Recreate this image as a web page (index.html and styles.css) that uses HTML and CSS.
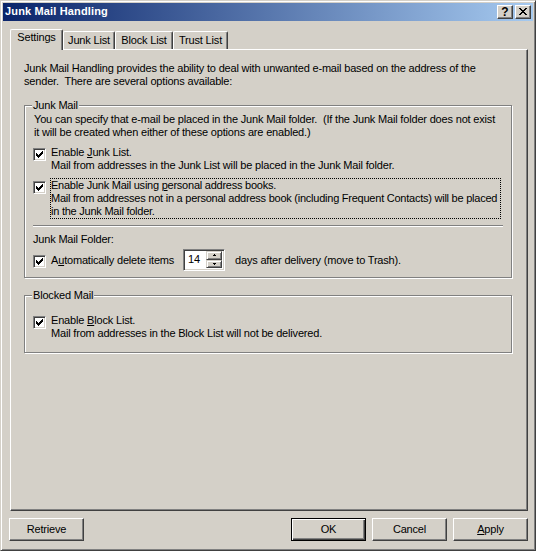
FILE: index.html
```html
<!DOCTYPE html>
<html>
<head>
<meta charset="utf-8">
<title>Junk Mail Handling</title>
<link rel="stylesheet" href="styles.css">
</head>
<body>
<div class="window">
  <div class="titlebar">
    <span class="title">Junk Mail Handling</span>
    <div class="caption-btns">
      <span class="cap-btn help">?</span>
      <span class="cap-btn close">
        <svg width="8" height="7" viewBox="0 0 8 7" shape-rendering="crispEdges"><path d="M0 0h2v1H0zM6 0h2v1H6zM1 1h2v1H1zM5 1h2v1H5zM2 2h4v1H2zM3 3h2v1H3zM2 4h4v1H2zM1 5h2v1H1zM5 5h2v1H5zM0 6h2v1H0zM6 6h2v1H6z" fill="#000"/></svg>
      </span>
    </div>
  </div>
  <div class="body">
    <div class="tabs">
      <div class="tab tab-settings active">Settings</div>
      <div class="tab tab-junk">Junk List</div>
      <div class="tab tab-block">Block List</div>
      <div class="tab tab-trust">Trust List</div>
    </div>
    <div class="panel">
      <p class="intro">Junk Mail Handling provides the ability to deal with unwanted e-mail based on the address of the<br>sender.&nbsp; There are several options available:</p>

      <div class="group group-junk">
        <span class="group-title">Junk Mail</span>
        <p class="desc">You can specify that e-mail be placed in the Junk Mail folder.&nbsp; (If the Junk Mail folder does not exist<br>it will be created when either of these options are enabled.)</p>
        <div class="check-row row-first">
          <span class="cb"><svg width="7" height="7" viewBox="0 0 7 7" shape-rendering="crispEdges"><path d="M6 0h1v3H6zM5 1h1v3H5zM4 2h1v3H4zM3 3h1v3H3zM2 4h1v3H2zM1 3h1v3H1zM0 2h1v3H0z" fill="#000"/></svg></span>
          <div class="check-text">Enable <u>J</u>unk List.<br>Mail from addresses in the Junk List will be placed in the Junk Mail folder.</div>
        </div>
        <div class="check-row row-second">
          <span class="cb"><svg width="7" height="7" viewBox="0 0 7 7" shape-rendering="crispEdges"><path d="M6 0h1v3H6zM5 1h1v3H5zM4 2h1v3H4zM3 3h1v3H3zM2 4h1v3H2zM1 3h1v3H1zM0 2h1v3H0z" fill="#000"/></svg></span>
          <div class="check-text focus">Enable Junk Mail using <u>p</u>ersonal address books.<br>Mail from addresses not in a personal address book (including Frequent Contacts) will be placed<br>in the Junk Mail folder.</div>
        </div>
        <div class="separator"></div>
        <div class="folder-label">Junk Mail Folder:</div>
        <div class="delete-row">
          <span class="cb"><svg width="7" height="7" viewBox="0 0 7 7" shape-rendering="crispEdges"><path d="M6 0h1v3H6zM5 1h1v3H5zM4 2h1v3H4zM3 3h1v3H3zM2 4h1v3H2zM1 3h1v3H1zM0 2h1v3H0z" fill="#000"/></svg></span>
          <span class="delete-label">A<u>u</u>tomatically delete items</span>
          <div class="spin">
            <span class="spin-value">14</span>
            <div class="spin-btns">
              <span class="spin-btn"><svg width="3" height="2" viewBox="0 0 3 2" shape-rendering="crispEdges"><path d="M1 0h1v1h1v1H0V1h1z" fill="#000"/></svg></span>
              <span class="spin-btn"><svg width="3" height="2" viewBox="0 0 3 2" shape-rendering="crispEdges"><path d="M0 0h3v1H2v1H1V1H0z" fill="#000"/></svg></span>
            </div>
          </div>
          <span class="after">days after delivery (move to Trash).</span>
        </div>
      </div>

      <div class="group group-blocked">
        <span class="group-title">Blocked Mail</span>
        <div class="check-row">
          <span class="cb"><svg width="7" height="7" viewBox="0 0 7 7" shape-rendering="crispEdges"><path d="M6 0h1v3H6zM5 1h1v3H5zM4 2h1v3H4zM3 3h1v3H3zM2 4h1v3H2zM1 3h1v3H1zM0 2h1v3H0z" fill="#000"/></svg></span>
          <div class="check-text">Enable <u>B</u>lock List.<br>Mail from addresses in the Block List will not be delivered.</div>
        </div>
      </div>
    </div>
    <div class="buttons">
      <span class="btn btn-retrieve">Retrieve</span>
      <span class="spacer"></span>
      <span class="btn btn-default">OK</span>
      <span class="btn">Cancel</span>
      <span class="btn"><u>A</u>pply</span>
    </div>
  </div>
</div>
</body>
</html>
```

FILE: styles.css
```css
* {
  box-sizing: border-box;
  margin: 0;
  padding: 0;
}

html, body {
  background: #d4d0c8;
}

body {
  margin: 0;
  font-family: "Liberation Sans", Arial, sans-serif;
  font-size: 11px;
  line-height: 13px;
  letter-spacing: -0.18px;
  color: #000;
}

u {
  text-decoration: underline;
  text-underline-offset: 1px;
}

.window {
  width: 536px;
  height: 551px;
  border: 1px solid;
  border-color: #d4d0c8 #404040 #404040 #d4d0c8;
  box-shadow: inset 1px 1px 0 #fff, inset -1px -1px 0 #808080;
  padding: 2px;
  background: #d4d0c8;
  display: flex;
  flex-direction: column;
}

/* Title bar */
.titlebar {
  height: 18px;
  flex: none;
  background: linear-gradient(to right, #0a246a, #a6caf0);
  display: flex;
  align-items: center;
  justify-content: space-between;
  padding: 0 2px;
}

.title {
  color: #fff;
  font-weight: bold;
  letter-spacing: 0.15px;
  margin-top: -1px;
}

.caption-btns {
  display: flex;
  gap: 2px;
}

.cap-btn {
  width: 16px;
  height: 14px;
  background: #d4d0c8;
  border: 1px solid;
  border-color: #fff #404040 #404040 #fff;
  box-shadow: inset -1px -1px 0 #808080;
  display: flex;
  align-items: center;
  justify-content: center;
}

.cap-btn.help {
  font-weight: bold;
  font-size: 12px;
  line-height: 12px;
  letter-spacing: 0;
  padding-bottom: 1px;
}

.cap-btn.close svg {
  display: block;
  margin-left: -1px;
  margin-top: -1px;
}

/* Body */
.body {
  flex: 1;
  display: flex;
  flex-direction: column;
  padding: 8px 5px 0 7px;
}

.tabs {
  height: 20px;
  display: flex;
  align-items: flex-end;
  position: relative;
  z-index: 1;
}

.tab {
  height: 18px;
  border-top: 1px solid #fff;
  border-left: 1px solid #fff;
  border-right: 1px solid #404040;
  box-shadow: inset -1px 0 0 #808080;
  border-radius: 2px 2px 0 0;
  background: #d4d0c8;
  text-align: center;
  padding-top: 2px;
  white-space: nowrap;
}

.tab.active {
  height: 21px;
  margin-bottom: -1px;
  padding-top: 1px;
}

.tab-settings { width: 53px; }
.tab-junk { width: 52px; }
.tab-block { width: 58px; }
.tab-trust { width: 55px; }

.panel {
  height: 462px;
  flex: none;
  border: 1px solid;
  border-color: #fff #404040 #404040 #fff;
  box-shadow: inset -1px -1px 0 #808080;
  padding: 12px 0 0 13px;
}

.intro {
  white-space: nowrap;
}

/* Group boxes */
.group {
  position: relative;
  width: 488px;
  border: 1px solid #808080;
  box-shadow: 1px 1px 0 #fff, inset 1px 1px 0 #fff;
  padding: 0 8px;
}

.group-title {
  position: absolute;
  top: -7px;
  left: 7px;
  padding: 0 1px;
  background: #d4d0c8;
  white-space: nowrap;
}

.group-junk {
  margin-top: 17px;
  padding-top: 7px;
  padding-bottom: 6px;
}

.group-blocked {
  margin-top: 17px;
  padding-top: 17px;
  padding-bottom: 11px;
}

.desc {
  margin-left: 1px;
  white-space: nowrap;
}

.check-row {
  display: flex;
  align-items: flex-start;
}

.row-first {
  margin-top: 6px;
}

.row-second {
  margin-top: 5px;
}

.cb {
  width: 13px;
  height: 13px;
  flex: none;
  background: #fff;
  border: 1px solid;
  border-color: #808080 #fff #fff #808080;
  box-shadow: inset 1px 1px 0 #404040, inset -1px -1px 0 #d4d0c8;
  padding: 2px;
  margin-top: 3px;
}

.cb svg {
  display: block;
}

.check-text {
  margin-left: 4px;
  border: 1px solid transparent;
  white-space: nowrap;
}

.check-text.focus {
  border: 1px dotted #000;
  width: 451px;
  letter-spacing: -0.24px;
}

.separator {
  margin-top: 6px;
  height: 2px;
  border-top: 1px solid #808080;
  border-bottom: 1px solid #fff;
}

.folder-label {
  margin-top: 6px;
}

.delete-row {
  margin-top: 3px;
  height: 22px;
  display: flex;
  align-items: center;
}

.delete-row .cb {
  margin-top: 2px;
}

.delete-label {
  width: 132px;
  margin-left: 5px;
  white-space: nowrap;
  margin-top: 1px;
}

.spin {
  width: 42px;
  height: 22px;
  background: #fff;
  border: 1px solid;
  border-color: #808080 #fff #fff #808080;
  box-shadow: inset 1px 1px 0 #404040, inset -1px -1px 0 #d4d0c8;
  padding: 1px;
  display: flex;
}

.spin-value {
  flex: 1;
  padding: 2px 0 0 3px;
}

.spin-btns {
  width: 16px;
  display: flex;
  flex-direction: column;
  margin: 0 1px 1px 0;
}

.spin-btn {
  flex: 1;
  background: #d4d0c8;
  border: 1px solid;
  border-color: #d4d0c8 #404040 #404040 #d4d0c8;
  box-shadow: inset 1px 1px 0 #fff, inset -1px -1px 0 #808080;
  display: flex;
  align-items: center;
  justify-content: center;
}

.spin-btn svg {
  display: block;
}

.after {
  margin-left: 10px;
  margin-top: 1px;
  white-space: nowrap;
}

/* Bottom buttons */
.buttons {
  margin-top: 7px;
  height: 23px;
  display: flex;
  gap: 6px;
}

.spacer {
  flex: 1;
}

.btn {
  width: 75px;
  height: 23px;
  background: #d4d0c8;
  border: 1px solid;
  border-color: #fff #404040 #404040 #fff;
  box-shadow: inset -1px -1px 0 #808080;
  display: flex;
  align-items: center;
  justify-content: center;
  padding-bottom: 1px;
}

.btn-retrieve {
  margin-left: -1px;
}

.btn-default {
  border: 1px solid #000;
  box-shadow: inset 1px 1px 0 #fff, inset -1px -1px 0 #404040, inset -2px -2px 0 #808080;
}
```
